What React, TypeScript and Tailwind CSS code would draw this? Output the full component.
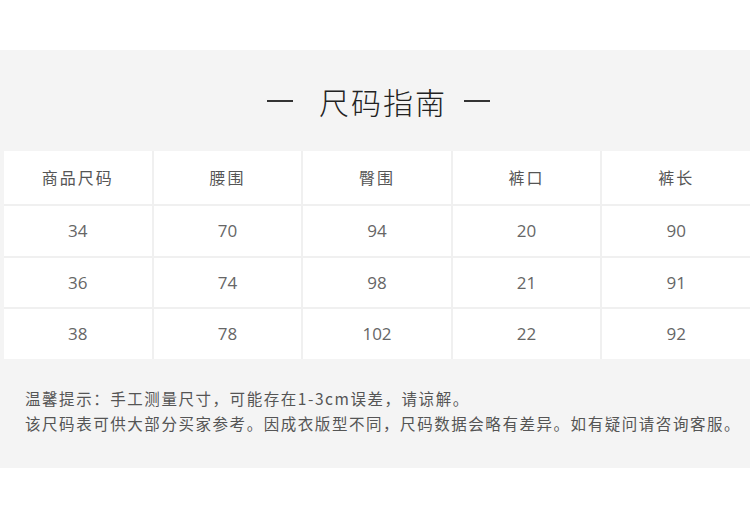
import React from "react";

const headers = ["商品尺码", "腰围", "臀围", "裤口", "裤长"];
const rows = [
  ["34", "70", "94", "20", "90"],
  ["36", "74", "98", "21", "91"],
  ["38", "78", "102", "22", "92"],
];

export default function App() {
  return (
    <div
      className="w-[750px] h-[514px] bg-white"
      style={{ fontFamily: '"Noto Sans CJK SC", "Noto Sans", sans-serif' }}
    >
      <div className="h-[50px]" />
      <div className="h-[418px] bg-[#f4f4f4] flex flex-col">
        <div className="h-[101px] flex items-center justify-center pl-[7px] pt-[1px] text-[#222] text-[30px] font-light">
          <span className="w-[26px] h-[1.5px] bg-[#333]" />
          <span className="ml-[26px] mr-[17px] tracking-[2px]">尺码指南</span>
          <span className="w-[26px] h-[1.5px] bg-[#333]" />
        </div>
        <div className="ml-[4px] grid grid-cols-5 gap-[2px] bg-[#f0f0f0]">
          {headers.map((h) => (
            <div
              key={h}
              className="h-[53px] bg-white flex items-center justify-center pb-[2px] text-[16px] text-[#555] tracking-[2px]"
            >
              {h}
            </div>
          ))}
          {rows.map((r, i) =>
            r.map((c, j) => (
              <div
                key={i + "-" + j}
                className="h-[49.5px] bg-white flex items-center justify-center text-[17px] text-[#666]"
                style={{ fontFamily: '"Open Sans", "Lato", sans-serif' }}
              >
                {c}
              </div>
            ))
          )}
        </div>
        <div className="pl-[25px] pt-[27px] text-[15.5px] leading-[25px] text-[#555] tracking-[1.55px]">
          <div>温馨提示：手工测量尺寸，可能存在1-3cm误差，请谅解。</div>
          <div>该尺码表可供大部分买家参考。因成衣版型不同，尺码数据会略有差异。如有疑问请咨询客服。</div>
        </div>
      </div>
    </div>
  );
}
